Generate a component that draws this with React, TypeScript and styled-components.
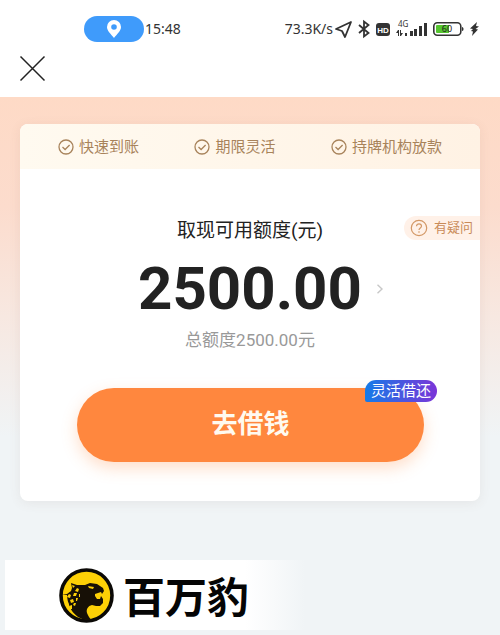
import React from "react";
import styled, { createGlobalStyle } from "styled-components";

const cjk = `"Noto Sans CJK SC", sans-serif`;

const GlobalStyle = createGlobalStyle`
  * { box-sizing: border-box; }
  body { margin: 0; background: #f0f4f6; font-family: Roboto, ${cjk}; color: #222; }
  button { font: inherit; border: 0; padding: 0; background: none; cursor: pointer; }
  svg { display: block; flex: none; overflow: visible; }
`;

const Page = styled.div`
  min-height: 100vh;
  display: flex;
  flex-direction: column;
`;

const Header = styled.header`
  background: #fff;
  padding: 16px 20px;
`;

const StatusBar = styled.div`
  display: flex;
  justify-content: space-between;
  align-items: center;
  height: 26px;
  padding: 0 1px 0 64px;
  font: 14px/26px "Noto Sans", sans-serif;
  color: #333;
`;

const StatusGroup = styled.div<{ $gap: number }>`
  display: flex;
  align-items: center;
  gap: ${(p) => p.$gap}px;
`;

const LocationPill = styled.span`
  display: flex;
  align-items: center;
  justify-content: center;
  width: 60px;
  height: 26px;
  border-radius: 13px;
  background: #3f9bfb;
`;

const CloseButton = styled.button`
  display: block;
  margin-top: 14px;
`;

const Main = styled.main`
  flex: 1;
  display: flex;
  flex-direction: column;
  padding: 27px 20px 5px;
  background: linear-gradient(180deg, #fedac6 0, #fcdccd 110px, #f7e8e1 220px, #f0f4f6 340px);
`;

const Card = styled.section`
  background: #fff;
  border-radius: 8px;
  box-shadow: 0 2px 12px rgba(120, 90, 80, 0.09);
  padding-bottom: 39px;
`;

const Features = styled.ul`
  display: flex;
  justify-content: space-between;
  align-items: center;
  list-style: none;
  margin: 0;
  height: 45px;
  padding: 0 38px;
  border-radius: 8px 8px 0 0;
  background: linear-gradient(90deg, #fffaf0, #fff2e4);
`;

const Feature = styled.li`
  display: flex;
  align-items: center;
  gap: 5px;
  font-size: 15px;
  line-height: 20px;
  color: #a8835b;
`;

const Quota = styled.div`
  position: relative;
  display: flex;
  flex-direction: column;
  align-items: center;
  padding-top: 48px;
`;

const QuotaTitle = styled.h1`
  margin: 0;
  font-size: 19px;
  font-weight: 400;
  line-height: 28px;
`;

const HelpButton = styled.button`
  && {
    position: absolute;
    top: 47px;
    right: 0;
    display: flex;
    align-items: center;
    gap: 6px;
    height: 24px;
    padding: 0 7px 0 6px;
    border-radius: 12px 0 0 12px;
    background: #fff1e8;
    font-size: 13px;
    line-height: 22px;
    color: #c98b58;
  }
`;

const Amount = styled.button`
  && {
    display: grid;
    grid-template-columns: 1fr auto 1fr;
    align-items: center;
    column-gap: 14px;
    width: 100%;
    margin-top: 8px;
    font-size: 60px;
    font-weight: 700;
    line-height: 72px;
    color: #222;
  }
`;

const AmountValue = styled.span`
  grid-column: 2;
`;

const Total = styled.p`
  margin: 2px 0 0;
  font-size: 17px;
  line-height: 26px;
  color: #999;
`;

const Action = styled.div`
  position: relative;
  margin: 35px 56px 0 57px;
`;

const BorrowButton = styled.button`
  && {
    width: 100%;
    height: 74px;
    padding-bottom: 7px;
    border-radius: 37px;
    background: #ff873e;
    box-shadow: 0 6px 16px rgba(255, 135, 62, 0.28);
    color: #fffaf0;
    font-size: 26px;
    font-weight: 700;
  }
`;

const Badge = styled.span`
  position: absolute;
  top: -8px;
  right: -13px;
  padding: 0 6px;
  border-radius: 11px 11px 11px 2px;
  background: linear-gradient(90deg, #147be8, #7b35d8);
  color: #fff;
  font-size: 15px;
  line-height: 22px;
`;

const Brand = styled.footer`
  display: flex;
  align-items: center;
  gap: 9px;
  height: 70px;
  width: 300px;
  margin: auto 0 0 -15px;
  padding-left: 54px;
  background: linear-gradient(90deg, #fff 80%, #f0f4f6);
`;

const BrandName = styled.span`
  font: 700 42px/60px ${cjk};
  color: #050505;
`;

const PinIcon = () => (
  <svg width="14" height="18" viewBox="0 0 14 18" aria-hidden="true">
    <path fillRule="evenodd" fill="#fff" d="M7 0a7 7 0 0 0-7 7c0 4 4 7 7 11 3-4 7-7 7-11a7 7 0 0 0-7-7Zm0 4.200a2.800 2.800 0 1 1 0 5.600 2.800 2.800 0 0 1 0-5.600Z" />
  </svg>
);

const CloseIcon = () => (
  <svg width="25" height="25" viewBox="0 0 25 25" fill="none" stroke="#222" strokeWidth="1.500">
    <path d="M.5.5l24 24M24.500.5l-24 24" />
  </svg>
);

const CheckIcon = () => (
  <svg width="16" height="16" viewBox="0 0 16 16" fill="none" stroke="#a8835b" strokeWidth="1.300" aria-hidden="true">
    <circle cx="8" cy="8" r="7" />
    <path d="M4.500 8l2.600 2.500 4.500-4.500" />
  </svg>
);

const HelpIcon = () => (
  <svg width="18" height="18" viewBox="0 0 18 18" fill="none" stroke="#d39866" strokeWidth="1.200" aria-hidden="true">
    <circle cx="9" cy="9" r="7.700" />
    <path d="M6.500 7.300c0-3.400 5-3.200 5-.2 0 1.900-2.500 1.900-2.500 4M9 12.300v1.500" />
  </svg>
);

const ChevronIcon = () => (
  <svg width="8" height="10" viewBox="0 0 8 10" fill="none" stroke="#c8c8c8" strokeWidth="1.400" aria-hidden="true">
    <path d="M1.500.7L6 5 1.500 9.300" />
  </svg>
);

const SendIcon = () => (
  <svg width="17" height="17" viewBox="0 0 17 17" fill="none" stroke="#333" strokeWidth="1.800" strokeLinejoin="round" aria-hidden="true">
    <path d="M16 1L1 8l6 2 3 6z" />
  </svg>
);

const BluetoothIcon = () => (
  <svg width="12" height="18" viewBox="0 0 12 18" fill="none" stroke="#333" strokeWidth="1.800" aria-hidden="true">
    <path d="M1 5l9.500 8L6 16.500v-15L10.500 5 1 13" />
  </svg>
);

const HdIcon = () => (
  <svg width="14" height="13" viewBox="0 0 14 13" aria-hidden="true">
    <rect width="14" height="13" rx="3" fill="#333" />
    <text x="7" y="9.500" textAnchor="middle" fontFamily="Liberation Sans" fontWeight="700" fontSize="8" fill="#fff">HD</text>
  </svg>
);

const SignalIcon = () => (
  <svg width="31" height="22" viewBox="0 0 31 22" fill="#333" aria-hidden="true">
    <text x="2" y="9" fontFamily="Noto Sans" fontSize="8">4G</text>
    <path d="M0 15l2-3h1v6H2v-3zM4 12h1v3h2l-2 3H4zM9 15h2v3H9zM14 13h3v5h-3zM18 11h3v7h-3zM23 8h3v10h-3zM28 5h3v13h-3z" />
  </svg>
);

const BatteryIcon = () => (
  <svg width="31" height="14" viewBox="0 0 31 14" aria-hidden="true">
    <rect x=".8" y=".8" width="27" height="12.400" rx="3.500" fill="#fff" stroke="#333" strokeWidth="1.600" />
    <path d="M4 3h12v8H4a1 1 0 0 1-1-1V4a1 1 0 0 1 1-1Z" fill="#55c52f" />
    <path d="M29 5c2 0 2 4 0 4z" fill="#333" />
    <text x="14" y="10" textAnchor="middle" fontFamily="Noto Sans" fontSize="9" fill="#222">60</text>
  </svg>
);

const BoltIcon = () => (
  <svg width="9" height="14" viewBox="0 0 9 14" fill="#333" aria-hidden="true">
    <path d="M7 0L0 6.500l3 .5-2 2 2 .5L2 14l6-6.500-2.500-.5L9 4.500 6 4z" />
  </svg>
);

const LeopardLogo = () => (
  <svg width="55" height="55" viewBox="0 0 55 55" role="img" aria-label="百万豹">
    <circle cx="27.500" cy="27.500" r="25.500" fill="#fdd006" stroke="#0b0906" strokeWidth="3.600" />
    <path fill="#171006" d="M3 27l5-1 4-3 1-3-1-5 6 2 8 0 5-2 7 1 6 4 1 3-2 3-1-2-3 1-3 1 0 2 2 3 3 0 1-3 2 3 0 4-3 3-4 0-4-1c-4 1-6 4-5 8 1 3 3 5 4 7-12 1-23-8-24-25z" />
    <path fill="#fdd006" d="M29 18l6 1-1 2-4-1zM13 17l3 1-2 2zM18 20l2 1-1 3-3-1zM15 25l3 0-1 3-3 0zM10 26l2 1-1 3-3-1zM4 29l3-1 1 3-3 1zM11 32l3-1 1 3-3 1zM17 30l2 0-1 3-1 0zM6 34l3 0 1 3-2 1zM15 35l2 0-1 3-2-1zM10 38l3-1 0 4-2 0zM20 26l1 0 0 3-1 0z" />
  </svg>
);

const features = ["快速到账", "期限灵活", "持牌机构放款"];

export default function App() {
  return (
    <Page>
      <GlobalStyle />
      <Header>
        <StatusBar>
          <StatusGroup $gap={1}>
            <LocationPill><PinIcon /></LocationPill>
            <span>15:48</span>
          </StatusGroup>
          <StatusGroup $gap={6}>
            <StatusGroup $gap={2}><span>73.3K/s</span><SendIcon /></StatusGroup>
            <BluetoothIcon />
            <HdIcon />
            <SignalIcon />
            <BatteryIcon />
            <BoltIcon />
          </StatusGroup>
        </StatusBar>
        <CloseButton aria-label="关闭"><CloseIcon /></CloseButton>
      </Header>
      <Main>
        <Card>
          <Features>
            {features.map((name) => (
              <Feature key={name}><CheckIcon />{name}</Feature>
            ))}
          </Features>
          <Quota>
            <QuotaTitle>取现可用额度(元)</QuotaTitle>
            <HelpButton><HelpIcon />有疑问</HelpButton>
            <Amount>
              <AmountValue>2500.00</AmountValue>
              <ChevronIcon />
            </Amount>
            <Total>总额度2500.00元</Total>
          </Quota>
          <Action>
            <BorrowButton>去借钱</BorrowButton>
            <Badge>灵活借还</Badge>
          </Action>
        </Card>
        <Brand>
          <LeopardLogo />
          <BrandName>百万豹</BrandName>
        </Brand>
      </Main>
    </Page>
  );
}
